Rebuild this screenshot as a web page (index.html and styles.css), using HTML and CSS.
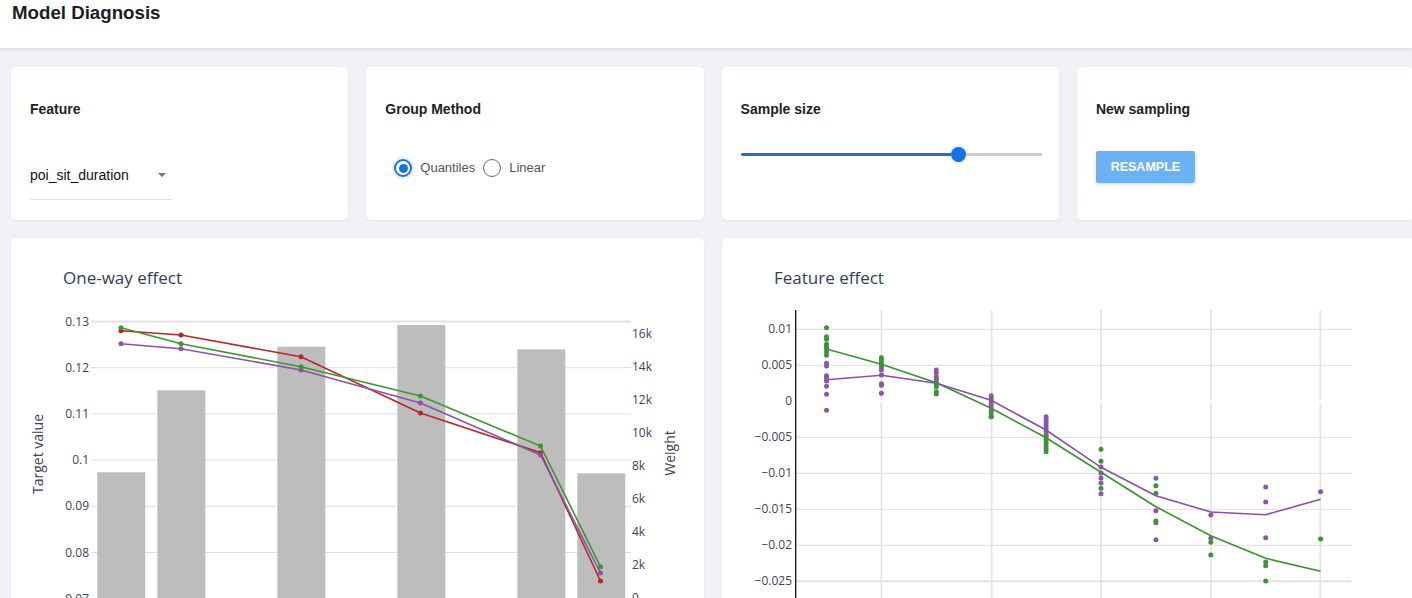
FILE: index.html
```html
<!DOCTYPE html>
<html lang="en">
<head>
<meta charset="utf-8">
<title>Model Diagnosis</title>
<link rel="stylesheet" href="styles.css">
</head>
<body>
<header class="topbar">
  <h1 class="app-title">Model Diagnosis</h1>
</header>
<main class="content">
  <section class="controls">
    <div class="card control-card">
      <div class="card-label">Feature</div>
      <div class="select">
        <span class="select-value">poi_sit_duration</span>
        <span class="select-arrow"></span>
      </div>
    </div>
    <div class="card control-card">
      <div class="card-label">Group Method</div>
      <div class="radios">
        <span class="radio radio-on"><span class="radio-dot"></span></span>
        <span class="radio-text">Quantiles</span>
        <span class="radio"></span>
        <span class="radio-text">Linear</span>
      </div>
    </div>
    <div class="card control-card">
      <div class="card-label">Sample size</div>
      <div class="slider">
        <span class="slider-fill"></span>
        <span class="slider-thumb"></span>
        <span class="slider-rest"></span>
      </div>
    </div>
    <div class="card control-card">
      <div class="card-label">New sampling</div>
      <button class="btn">RESAMPLE</button>
    </div>
  </section>

  <section class="charts">
    <div class="card chart-card">
      <svg class="chart" width="693" height="420" viewBox="0 0 693 420">
        <text class="ctitle" x="52" y="46">One-way effect</text>
        <g class="hgrid">
          <line x1="80" x2="620" y1="83.5" y2="83.5" class="g-top"/>
          <line x1="80" x2="620" y1="129.7" y2="129.7"/>
          <line x1="80" x2="620" y1="175.9" y2="175.9"/>
          <line x1="80" x2="620" y1="222.1" y2="222.1"/>
          <line x1="80" x2="620" y1="268.3" y2="268.3"/>
          <line x1="80" x2="620" y1="314.5" y2="314.5"/>
          <line x1="80" x2="620" y1="360.7" y2="360.7"/>
        </g>
        <g class="ticks tl">
          <text x="78" y="87.5">0.13</text>
          <text x="78" y="133.7">0.12</text>
          <text x="78" y="179.9">0.11</text>
          <text x="78" y="226.1">0.1</text>
          <text x="78" y="272.3">0.09</text>
          <text x="78" y="318.5">0.08</text>
          <text x="78" y="364.7">0.07</text>
        </g>
        <g class="ticks tr">
          <text x="621" y="100.3">16k</text>
          <text x="621" y="133.3">14k</text>
          <text x="621" y="166.3">12k</text>
          <text x="621" y="199.3">10k</text>
          <text x="621" y="232.3">8k</text>
          <text x="621" y="265.3">6k</text>
          <text x="621" y="298.3">4k</text>
          <text x="621" y="331.3">2k</text>
          <text x="621" y="364.3">0</text>
        </g>
        <g class="bars">
          <rect x="86.3" y="234.3" width="48" height="200"/>
          <rect x="146.3" y="152.3" width="48" height="280"/>
          <rect x="266.3" y="108.7" width="48" height="320"/>
          <rect x="386.3" y="87" width="48" height="340"/>
          <rect x="506.3" y="111.3" width="48" height="320"/>
          <rect x="566.3" y="235.3" width="48" height="200"/>
        </g>
        <g class="series red">
          <polyline points="110,92.7 170,97 290,118.7 409.5,175 529.5,214.7 589.5,343"/>
          <circle cx="110" cy="92.7" r="2.5"/><circle cx="170" cy="97" r="2.5"/><circle cx="290" cy="118.7" r="2.5"/><circle cx="409.5" cy="175" r="2.5"/><circle cx="529.5" cy="214.7" r="2.5"/><circle cx="589.5" cy="343" r="2.5"/>
        </g>
        <g class="series purple">
          <polyline points="110,105.7 170,110.7 290,132 409.5,165 529.5,217 589.5,335"/>
          <circle cx="110" cy="105.7" r="2.5"/><circle cx="170" cy="110.7" r="2.5"/><circle cx="290" cy="132" r="2.5"/><circle cx="409.5" cy="165" r="2.5"/><circle cx="529.5" cy="217" r="2.5"/><circle cx="589.5" cy="335" r="2.5"/>
        </g>
        <g class="series green">
          <polyline points="110,89.7 170,105.7 290,128.7 409.5,158 529.5,208 589.5,328.7"/>
          <circle cx="110" cy="89.7" r="2.5"/><circle cx="170" cy="105.7" r="2.5"/><circle cx="290" cy="128.7" r="2.5"/><circle cx="409.5" cy="158" r="2.5"/><circle cx="529.5" cy="208" r="2.5"/><circle cx="589.5" cy="328.7" r="2.5"/>
        </g>
        <text class="atitle" transform="translate(32,216) rotate(-90)">Target value</text>
        <text class="atitle" transform="translate(664,215) rotate(-90)">Weight</text>
      </svg>
    </div>

    <div class="card chart-card">
      <svg class="chart" width="693" height="420" viewBox="0 0 693 420">
        <text class="ctitle" x="52" y="46">Feature effect</text>
        <g class="hgrid">
          <line x1="74" x2="629.3" y1="91.3" y2="91.3"/>
          <line x1="74" x2="629.3" y1="127.3" y2="127.3"/>
          <line x1="74" x2="629.3" y1="199.3" y2="199.3"/>
          <line x1="74" x2="629.3" y1="235.3" y2="235.3"/>
          <line x1="74" x2="629.3" y1="271.3" y2="271.3"/>
          <line x1="74" x2="629.3" y1="307.3" y2="307.3"/>
          <line x1="74" x2="629.3" y1="343.3" y2="343.3" class="g-top"/>
        </g>
        <g class="vgrid">
          <line x1="159.3" x2="159.3" y1="72" y2="420"/>
          <line x1="269.7" x2="269.7" y1="72" y2="420"/>
          <line x1="379" x2="379" y1="72" y2="420"/>
          <line x1="489" x2="489" y1="72" y2="420"/>
          <line x1="598.3" x2="598.3" y1="72" y2="420"/>
        </g>
        <line class="zero" x1="74" x2="629.3" y1="163.3" y2="163.3"/>
        <line class="axis" x1="73.7" x2="73.7" y1="72" y2="420"/>
        <g class="ticks tl">
          <text x="70" y="95.3">0.01</text>
          <text x="70" y="131.3">0.005</text>
          <text x="70" y="167.3">0</text>
          <text x="70" y="203.3">−0.005</text>
          <text x="70" y="239.3">−0.01</text>
          <text x="70" y="275.3">−0.015</text>
          <text x="70" y="311.3">−0.02</text>
          <text x="70" y="347.3">−0.025</text>
        </g>
        <g class="dots dpurple">
          <circle cx="104.5" cy="125.3" r="2.5"/><circle cx="104.5" cy="128" r="2.5"/><circle cx="104.5" cy="137.7" r="2.5"/><circle cx="104.5" cy="140.3" r="2.5"/><circle cx="104.5" cy="143" r="2.5"/><circle cx="104.5" cy="148.3" r="2.5"/><circle cx="104.5" cy="156.3" r="2.5"/><circle cx="104.5" cy="172.3" r="2.5"/>
          <circle cx="159.4" cy="129" r="2.5"/><circle cx="159.4" cy="132" r="2.5"/><circle cx="159.4" cy="137" r="2.5"/><circle cx="159.4" cy="145.7" r="2.5"/><circle cx="159.4" cy="147.3" r="2.5"/><circle cx="159.4" cy="155.3" r="2.5"/>
          <circle cx="214.3" cy="132" r="2.5"/><circle cx="214.3" cy="134.7" r="2.5"/><circle cx="214.3" cy="138.7" r="2.5"/><circle cx="214.3" cy="141.3" r="2.5"/>
          <circle cx="269.2" cy="157.7" r="2.5"/><circle cx="269.2" cy="160.7" r="2.5"/><circle cx="269.2" cy="163.7" r="2.5"/><circle cx="269.2" cy="166.7" r="2.5"/><circle cx="269.2" cy="169.7" r="2.5"/><circle cx="269.2" cy="172.7" r="2.5"/><circle cx="269.2" cy="178.7" r="2.5"/>
          <circle cx="324.1" cy="178.7" r="2.5"/><circle cx="324.1" cy="181.7" r="2.5"/><circle cx="324.1" cy="184.7" r="2.5"/><circle cx="324.1" cy="187.7" r="2.5"/><circle cx="324.1" cy="190.7" r="2.5"/><circle cx="324.1" cy="193.7" r="2.5"/><circle cx="324.1" cy="196.7" r="2.5"/>
          <circle cx="379" cy="229" r="2.5"/><circle cx="379" cy="235" r="2.5"/><circle cx="379" cy="240" r="2.5"/><circle cx="379" cy="245" r="2.5"/><circle cx="379" cy="255.7" r="2.5"/>
          <circle cx="433.9" cy="240.3" r="2.5"/><circle cx="433.9" cy="272.7" r="2.5"/><circle cx="433.9" cy="284.7" r="2.5"/><circle cx="433.9" cy="301.7" r="2.5"/>
          <circle cx="488.8" cy="277" r="2.5"/><circle cx="488.8" cy="300.3" r="2.5"/>
          <circle cx="543.7" cy="249" r="2.5"/><circle cx="543.7" cy="264" r="2.5"/><circle cx="543.7" cy="299.7" r="2.5"/>
          <circle cx="598.6" cy="253.7" r="2.5"/>
        </g>
        <g class="dots dgreen">
          <circle cx="104.5" cy="89.7" r="2.5"/><circle cx="104.5" cy="98.7" r="2.5"/><circle cx="104.5" cy="101.3" r="2.5"/><circle cx="104.5" cy="106.3" r="2.5"/><circle cx="104.5" cy="108.7" r="2.5"/><circle cx="104.5" cy="110.7" r="2.5"/><circle cx="104.5" cy="114" r="2.5"/><circle cx="104.5" cy="117.3" r="2.5"/>
          <circle cx="159.4" cy="119.7" r="2.5"/><circle cx="159.4" cy="122" r="2.5"/><circle cx="159.4" cy="124.7" r="2.5"/><circle cx="159.4" cy="127.3" r="2.5"/>
          <circle cx="214.3" cy="143.7" r="2.5"/><circle cx="214.3" cy="146.7" r="2.5"/><circle cx="214.3" cy="148.7" r="2.5"/><circle cx="214.3" cy="153.7" r="2.5"/><circle cx="214.3" cy="156" r="2.5"/>
          <circle cx="269.2" cy="175" r="2.5"/><circle cx="269.2" cy="178.7" r="2.5"/>
          <circle cx="324.1" cy="198.7" r="2.5"/><circle cx="324.1" cy="201.7" r="2.5"/><circle cx="324.1" cy="204.7" r="2.5"/><circle cx="324.1" cy="207.7" r="2.5"/><circle cx="324.1" cy="210.7" r="2.5"/><circle cx="324.1" cy="213.7" r="2.5"/>
          <circle cx="379" cy="211.3" r="2.5"/><circle cx="379" cy="223.3" r="2.5"/><circle cx="379" cy="250.3" r="2.5"/>
          <circle cx="433.9" cy="247.7" r="2.5"/><circle cx="433.9" cy="255.3" r="2.5"/><circle cx="433.9" cy="283" r="2.5"/>
          <circle cx="488.8" cy="304.3" r="2.5"/><circle cx="488.8" cy="317" r="2.5"/>
          <circle cx="543.7" cy="324" r="2.5"/><circle cx="543.7" cy="327.7" r="2.5"/><circle cx="543.7" cy="343" r="2.5"/>
          <circle cx="598.6" cy="301" r="2.5"/>
        </g>
        <polyline class="fline fgreen" points="104.5,111 159.4,126.3 214.3,144.7 269.2,170.3 324.1,199.7 379,234.3 433.9,268.7 488.8,297.7 543.7,320.3 598.6,333.3"/>
        <polyline class="fline fpurple" points="104.5,141.7 159.4,137.3 214.3,145.3 269.2,162.3 324.1,192 379,229.3 433.9,257.7 488.8,274 543.7,276.7 598.6,261.3"/>
      </svg>
    </div>
  </section>
</main>
</body>
</html>
```

FILE: styles.css
```css
html, body {
  margin: 0;
  padding: 0;
  overflow: hidden;
}

body {
  background: #f0f2f5;
  font-family: "Liberation Sans", Arial, sans-serif;
  color: #222;
  width: 1412px;
  height: 598px;
}

.topbar {
  background: #fff;
  height: 48px;
  box-shadow: 0 1px 4px rgba(0, 0, 0, 0.12);
  padding-left: 12px;
  position: relative;
  z-index: 1;
}

.app-title {
  margin: 0;
  padding-top: 1px;
  font-size: 18.7px;
  line-height: 24px;
  font-weight: bold;
  color: #1d1d1d;
}

.content {
  padding: 19px 0 0 11px;
}

.controls {
  display: grid;
  grid-template-columns: repeat(4, 337.3px);
  column-gap: 18px;
}

.card {
  background: #fff;
  border-radius: 5px;
  box-shadow: 0 1px 3px rgba(0, 0, 0, 0.06);
}

.control-card {
  height: 153px;
  box-sizing: border-box;
  padding: 32px 19px 0 19px;
}

.card-label {
  font-size: 14px;
  font-weight: bold;
  line-height: 20px;
  color: #222;
}

.select {
  margin-top: 46px;
  width: 143px;
  height: 35px;
  box-sizing: border-box;
  border-bottom: 1px solid #e2e2e2;
  display: flex;
  align-items: flex-start;
  justify-content: space-between;
  padding-right: 7px;
}

.select-value {
  font-size: 14px;
  line-height: 20px;
  color: #111;
}

.select-arrow {
  width: 0;
  height: 0;
  margin-top: 8px;
  border-left: 4.5px solid transparent;
  border-right: 4.5px solid transparent;
  border-top: 4.5px solid #757575;
}

.radios {
  margin-top: 40px;
  margin-left: 9px;
  display: flex;
  align-items: center;
  height: 18px;
}

.radio {
  width: 18px;
  height: 18px;
  box-sizing: border-box;
  border: 1.6px solid #6e6e6e;
  border-radius: 50%;
  display: flex;
  align-items: center;
  justify-content: center;
}

.radio-on {
  border: 2px solid #1a73d9;
  box-shadow: 0 0 0 2px rgba(26, 115, 232, 0.12);
}

.radio-dot {
  width: 9px;
  height: 9px;
  border-radius: 50%;
  background: #1a73e0;
}

.radio-text {
  font-size: 13px;
  line-height: 18px;
  color: #555;
  margin-left: 8px;
  margin-right: 8px;
}

.slider {
  margin-top: 28px;
  width: 301px;
  height: 15px;
  display: flex;
  align-items: center;
}

.slider-fill {
  width: 210px;
  height: 3px;
  background: #2f6cb3;
  border-radius: 2px 0 0 2px;
}

.slider-thumb {
  width: 15px;
  height: 15px;
  border-radius: 50%;
  background: #1472e3;
  box-shadow: 0 0 3px rgba(20, 114, 227, 0.35);
}

.slider-rest {
  flex: 1;
  height: 3px;
  background: #cbcbcb;
}

.btn {
  display: block;
  margin-top: 32px;
  width: 99px;
  height: 32px;
  border: none;
  border-radius: 3px;
  background: #6cb1f4;
  color: #fff;
  font-family: "Liberation Sans", Arial, sans-serif;
  font-size: 12.5px;
  font-weight: bold;
  padding: 0;
  box-shadow: inset 1px 1px 0 #a3a3a3, 0 1px 4px rgba(108, 177, 244, 0.45);
}

.charts {
  margin-top: 18px;
  display: grid;
  grid-template-columns: repeat(2, 693px);
  column-gap: 18px;
}

.chart-card {
  height: 420px;
  overflow: hidden;
}

.chart {
  display: block;
  font-family: "Open Sans", "Liberation Sans", sans-serif;
}

.ctitle {
  font-size: 17px;
  fill: #323f52;
}

.atitle {
  font-size: 14px;
  fill: #3a4556;
  text-anchor: middle;
}

.ticks text {
  font-size: 12px;
  fill: #3a4556;
}

.tl text {
  text-anchor: end;
}

.tr text {
  text-anchor: start;
}

.hgrid line {
  stroke: #dedede;
  stroke-width: 1;
}

.hgrid line.g-top {
  stroke: #e2e2e2;
  stroke-width: 2;
}

.vgrid line {
  stroke: #e3e3e3;
  stroke-width: 1.6;
}

.zero {
  stroke: #fff;
  stroke-width: 2.5;
}

.axis {
  stroke: #111;
  stroke-width: 1.3;
}

.bars rect {
  fill: #bdbdbd;
}

.series polyline {
  fill: none;
  stroke-width: 1.6;
}

.red polyline { stroke: #b3282a; }
.red circle { fill: #b3282a; }
.purple polyline { stroke: #8b52a6; }
.purple circle { fill: #8b52a6; }
.green polyline { stroke: #3b9731; }
.green circle { fill: #3b9731; }

.dpurple circle { fill: #8a58a3; }
.dgreen circle { fill: #3e923a; }

.fline {
  fill: none;
  stroke-width: 1.6;
}

.fgreen { stroke: #3a922f; }
.fpurple { stroke: #8a4fa6; }
```
